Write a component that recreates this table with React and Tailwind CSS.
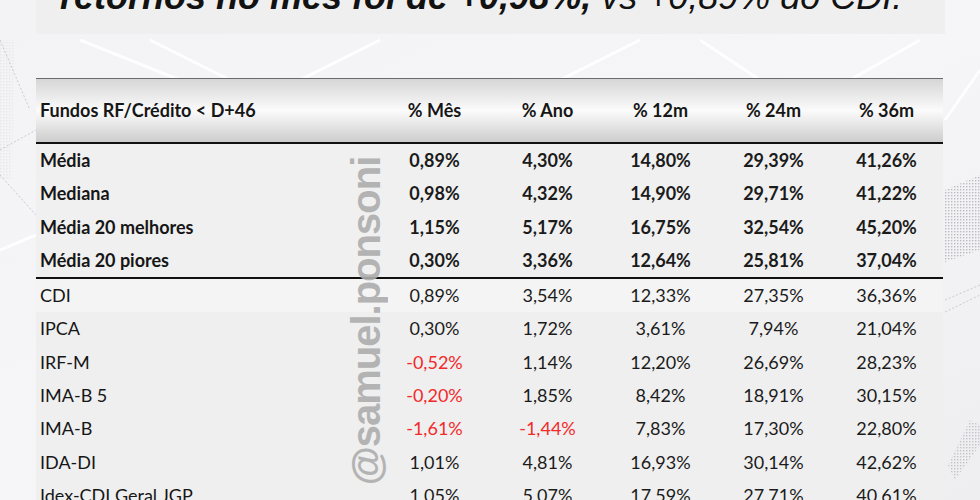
import React from 'react';

const columns = ['% Mês', '% Ano', '% 12m', '% 24m', '% 36m'];

const summaryRows = [
  { label: 'Média', values: ['0,89%', '4,30%', '14,80%', '29,39%', '41,26%'] },
  { label: 'Mediana', values: ['0,98%', '4,32%', '14,90%', '29,71%', '41,22%'] },
  { label: 'Média 20 melhores', values: ['1,15%', '5,17%', '16,75%', '32,54%', '45,20%'] },
  { label: 'Média 20 piores', values: ['0,30%', '3,36%', '12,64%', '25,81%', '37,04%'] },
];

const benchmarkRows = [
  { label: 'CDI', values: ['0,89%', '3,54%', '12,33%', '27,35%', '36,36%'] },
  { label: 'IPCA', values: ['0,30%', '1,72%', '3,61%', '7,94%', '21,04%'] },
  { label: 'IRF-M', values: ['-0,52%', '1,14%', '12,20%', '26,69%', '28,23%'] },
  { label: 'IMA-B 5', values: ['-0,20%', '1,85%', '8,42%', '18,91%', '30,15%'] },
  { label: 'IMA-B', values: ['-1,61%', '-1,44%', '7,83%', '17,30%', '22,80%'] },
  { label: 'IDA-DI', values: ['1,01%', '4,81%', '16,93%', '30,14%', '42,62%'] },
  { label: 'Idex-CDI Geral JGP', values: ['1,05%', '5,07%', '17,59%', '27,71%', '40,61%'] },
];

// faint background artwork (the slide photo behind the table)
const Backdrop = () => (
  <svg className="absolute inset-0" width="980" height="500" viewBox="0 0 980 500">
    <defs>
      <pattern id="dots" width="3" height="3" patternUnits="userSpaceOnUse">
        <rect width="1.4" height="1.4" fill="#8d8d9a" />
      </pattern>
    </defs>
    <g stroke="#ffffff" strokeWidth="3" fill="none" opacity="0.9">
      <line x1="80" y1="40" x2="180" y2="80" />
      <line x1="150" y1="40" x2="230" y2="80" />
      <line x1="380" y1="40" x2="300" y2="80" />
      <line x1="560" y1="80" x2="640" y2="40" />
      <line x1="700" y1="40" x2="760" y2="80" />
      <line x1="850" y1="80" x2="920" y2="40" />
      <line x1="945" y1="120" x2="980" y2="70" />
      <line x1="0" y1="250" x2="36" y2="235" />
    </g>
    <g stroke="#c9c9d2" strokeWidth="1" fill="none" strokeDasharray="2 2">
      <line x1="0" y1="40" x2="30" y2="110" />
      <line x1="0" y1="150" x2="36" y2="130" />
      <line x1="0" y1="175" x2="36" y2="215" />
      <line x1="945" y1="300" x2="980" y2="285" />
      <line x1="945" y1="312" x2="980" y2="295" />
    </g>
    <path d="M945 190 L980 175 L980 250 L945 262 Z" fill="url(#dots)" opacity="0.55" />
    <path d="M948 465 L970 420 L980 425 L980 445 L955 480 Z" fill="url(#dots)" opacity="0.45" />
    <path d="M0 40 L14 40 L12 180 L0 180 Z" fill="url(#dots)" opacity="0.12" />
  </svg>
);

const ValueCell = ({ value, bold }) => {
  const negative = value.startsWith('-');
  return (
    <div
      className={`text-center ${bold ? 'font-bold' : 'font-normal'} ${
        negative ? 'text-[#f22a2a]' : 'text-[#1b1b1b]'
      }`}
    >
      {value}
    </div>
  );
};

const TableRow = ({ row, bold }) => (
  <div className="grid grid-cols-[342px_repeat(5,113px)] h-[33.3px] items-center leading-[33.3px]">
    <div className={`pl-[4px] text-[#161616] ${bold ? 'font-bold' : 'font-normal'}`}>{row.label}</div>
    {row.values.map((v, i) => (
      <ValueCell key={i} value={v} bold={bold} />
    ))}
  </div>
);

export default function App() {
  return (
    <div className="relative w-[980px] h-[500px] overflow-hidden bg-linear-to-br from-[#f3f3f5] via-[#f6f6f8] to-[#eeeef1]">
      <Backdrop />

      <div className="relative pl-[36px]">
        {/* headline strip, cropped at the top of the frame */}
        <div className="w-[909px] h-[34px] overflow-hidden bg-[#efefef]">
          <p className="-mt-[21px] pl-[24px] whitespace-nowrap text-[36px] leading-[36px] italic text-[#121212] font-['Liberation_Sans',Arial,sans-serif]">
            <span className="font-bold">retornos no mês foi de +0,98%,</span> vs +0,89% do CDI.
          </p>
        </div>

        {/* returns table */}
        <div className="mt-[44px] w-[907px] text-[18px] font-['Lato','Noto_Sans',sans-serif]">
          <div className="grid grid-cols-[342px_repeat(5,113px)] items-center h-[66px] border-t border-[#6b6b6b] border-b-2 border-b-[#111] bg-linear-to-b from-[#d6d6d6] via-[#fbfbfb] to-[#cdcdcd] font-bold text-[#161616]">
            <div className="pl-[4px]">Fundos RF/Crédito &lt; D+46</div>
            {columns.map((c) => (
              <div key={c} className="text-center">
                {c}
              </div>
            ))}
          </div>

          <div className="bg-[#f0f0f0]">
            {summaryRows.map((r) => (
              <TableRow key={r.label} row={r} bold />
            ))}
          </div>

          <div className="h-[2px] bg-[#111]" />

          <div className="bg-[#efefef]">
            {benchmarkRows.map((r, i) => (
              <div key={r.label} className={i === 0 ? 'bg-[#f4f4f4]' : ''}>
                <TableRow row={r} />
              </div>
            ))}
          </div>
        </div>
      </div>

      {/* handle watermark */}
      <div className="absolute left-[366px] top-[321px] -translate-x-1/2 -translate-y-1/2 -rotate-90 whitespace-nowrap text-[40px] tracking-[-1px] leading-none font-bold text-[#adadad] opacity-90 font-['Liberation_Sans',Arial,sans-serif]">
        @samuel.ponsoni
      </div>
    </div>
  );
}
